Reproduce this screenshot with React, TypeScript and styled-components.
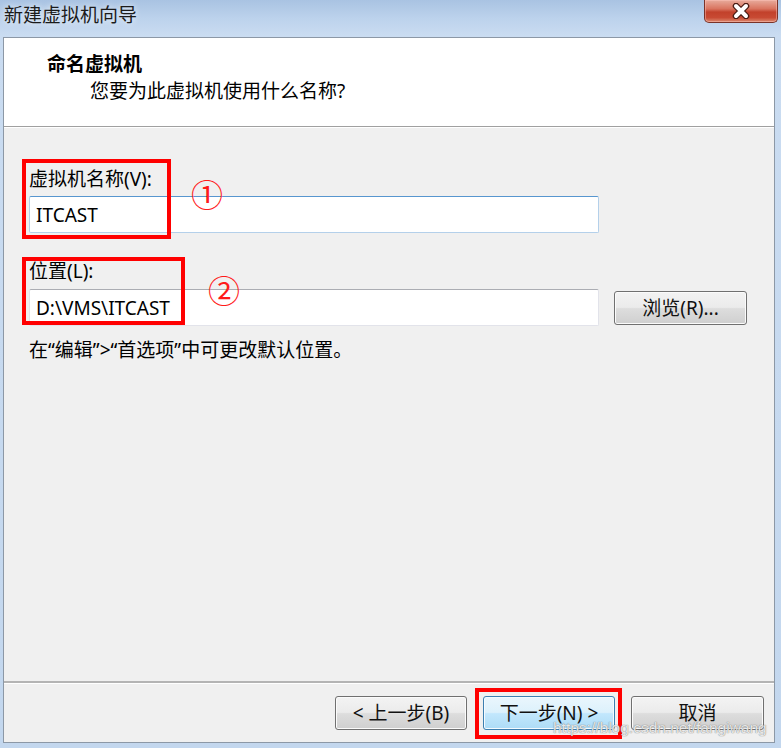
import React from "react";
import styled, { createGlobalStyle } from "styled-components";

const GlobalStyle = createGlobalStyle`
  html, body {
    margin: 0;
    padding: 0;
  }
  body {
    width: 781px;
    height: 748px;
    overflow: hidden;
    font-family: "Noto Sans", "Noto Sans CJK SC", sans-serif;
    color: #000;
  }
`;

const Frame = styled.div`
  width: 781px;
  height: 748px;
  box-sizing: border-box;
  display: flex;
  flex-direction: column;
  padding: 0 6px 5px 3px;
  background: linear-gradient(180deg, #a9c3e2 0px, #bcd2ec 18px, #cadcf1 36px, #c3d7ee 100%);
`;

const TitleBar = styled.div`
  height: 37px;
  flex: none;
  display: flex;
  justify-content: space-between;
  align-items: flex-start;
`;

const TitleText = styled.span`
  padding: 3px 0 0 1px;
  font-size: 19px;
  line-height: 24px;
  color: #1b1b1b;
  text-shadow: 0 0 6px rgba(255, 255, 255, 0.9);
`;

const CloseButton = styled.div`
  width: 74px;
  height: 23px;
  margin-right: -3px;
  box-sizing: border-box;
  border: 1px solid #7a3328;
  border-top: none;
  border-radius: 0 0 5px 5px;
  display: flex;
  align-items: center;
  justify-content: center;
  background: linear-gradient(180deg, #e8ab9c 0%, #d9745f 40%, #c2412b 55%, #c84a33 80%, #dc8a70 100%);
  box-shadow: inset 0 0 0 1px rgba(255, 200, 190, 0.45);
`;

const Client = styled.div`
  flex: 1;
  display: flex;
  flex-direction: column;
  border: 1px solid #8c98a6;
  background: #f0f0f0;
  min-height: 0;
`;

const Header = styled.div`
  height: 89px;
  flex: none;
  box-sizing: border-box;
  background: #fff;
  border-bottom: 1px solid #a0a0a0;
  box-shadow: 0 1px 0 #ffffff;
  padding: 14px 0 0 43px;
`;

const HeaderTitle = styled.div`
  font-size: 19px;
  line-height: 24px;
  font-weight: 700;
`;

const HeaderSubtitle = styled.div`
  margin-top: 3px;
  padding-left: 43px;
  font-size: 19px;
  line-height: 24px;
`;

const Body = styled.div`
  flex: 1;
  position: relative;
  margin-top: 1px;
  padding: 39px 27px 0 25px;
`;

const Label = styled.div<{ $gap: number }>`
  font-size: 19px;
  line-height: 24px;
  margin-bottom: ${(p) => p.$gap}px;
`;

const FieldRow = styled.div<{ $after: number }>`
  display: grid;
  grid-template-columns: 1fr 133px;
  column-gap: 15px;
  align-items: center;
  margin-bottom: ${(p) => p.$after}px;
`;

const TextInput = styled.input<{ $focused?: boolean }>`
  height: 37px;
  box-sizing: border-box;
  padding: 0 6px;
  margin: 0;
  border: 1px solid ${(p) => (p.$focused ? "#b4d0ea" : "#e2e3ea")};
  border-top-color: ${(p) => (p.$focused ? "#5796cf" : "#abadb3")};
  border-radius: 2px;
  background: #fff;
  font-family: "Noto Sans", "Noto Sans CJK SC", sans-serif;
  font-size: 19px;
  color: #000;
  outline: none;
`;

const Hint = styled.div`
  font-size: 19px;
  line-height: 24px;
`;

const Button = styled.div<{ $hot?: boolean; $w?: number }>`
  width: ${(p) => p.$w ?? 133}px;
  height: 34px;
  box-sizing: border-box;
  display: flex;
  align-items: center;
  justify-content: center;
  border: 1px solid ${(p) => (p.$hot ? "#3c7fb1" : "#707070")};
  border-radius: 3px;
  background: ${(p) =>
    p.$hot
      ? "linear-gradient(180deg, #eaf6fd 0%, #dcf1fc 48%, #c2e7fd 52%, #addcf6 100%)"
      : "linear-gradient(180deg, #f3f3f3 0%, #ebebeb 48%, #dddddd 52%, #cfcfcf 100%)"};
  box-shadow: inset 0 0 0 1px ${(p) => (p.$hot ? "#f4fbff" : "#fbfbfb")};
  font-size: 19px;
  line-height: 24px;
  color: #111;
  white-space: pre;
`;

const Footer = styled.div`
  height: 61px;
  flex: none;
  box-sizing: border-box;
  position: relative;
  border-top: 2px solid #b4b4b4;
  box-shadow: inset 0 1px 0 #ffffff;
  display: flex;
  justify-content: flex-end;
  align-items: flex-start;
  gap: 16px;
  padding: 13px 10px 0 0;
`;

const NextWrap = styled.div`
  position: relative;
`;

const RedBox = styled.div<{ $x: number; $y: number; $w: number; $h: number }>`
  position: absolute;
  left: ${(p) => p.$x}px;
  top: ${(p) => p.$y}px;
  width: ${(p) => p.$w}px;
  height: ${(p) => p.$h}px;
  box-sizing: border-box;
  border: 4px solid #ff0000;
  pointer-events: none;
`;

const Mark = styled.span<{ $x: number; $y: number }>`
  position: absolute;
  left: ${(p) => p.$x}px;
  top: ${(p) => p.$y}px;
  font-family: "Noto Sans CJK SC", sans-serif;
  font-size: 32px;
  line-height: 32px;
  color: #ff1a1a;
`;

const Watermark = styled.span`
  position: absolute;
  left: 549px;
  top: 35px;
  font-family: "Liberation Sans", Arial, sans-serif;
  font-size: 15.5px;
  line-height: 20px;
  white-space: nowrap;
  color: rgba(250, 250, 250, 0.85);
  text-shadow: 0 0 1px rgba(110, 110, 110, 0.8), 0 0 1px rgba(110, 110, 110, 0.6);
  pointer-events: none;
`;

const CloseGlyph = () => (
  <svg width="20" height="16" viewBox="0 0 20 16">
    <path d="M5 3 L15 13 M15 3 L5 13" stroke="#4a1c14" strokeWidth="6.5" strokeLinecap="round" />
    <path d="M5 3 L15 13 M15 3 L5 13" stroke="#ffffff" strokeWidth="4" strokeLinecap="round" />
  </svg>
);

const App = () => (
  <>
    <GlobalStyle />
    <Frame>
      <TitleBar>
        <TitleText>新建虚拟机向导</TitleText>
        <CloseButton>
          <CloseGlyph />
        </CloseButton>
      </TitleBar>
      <Client>
        <Header>
          <HeaderTitle>命名虚拟机</HeaderTitle>
          <HeaderSubtitle>您要为此虚拟机使用什么名称?</HeaderSubtitle>
        </Header>
        <Body>
          <Label $gap={5}>虚拟机名称(V):</Label>
          <FieldRow $after={26}>
            <TextInput $focused readOnly value="ITCAST" />
            <span />
          </FieldRow>
          <Label $gap={6}>位置(L):</Label>
          <FieldRow $after={12}>
            <TextInput readOnly value="D:\VMS\ITCAST" />
            <Button>浏览(R)...</Button>
          </FieldRow>
          <Hint>在“编辑”&gt;“首选项”中可更改默认位置。</Hint>

          <RedBox $x={18} $y={31} $w={149} $h={80} />
          <RedBox $x={18} $y={129} $w={163} $h={68} />
          <Mark $x={187} $y={49}>①</Mark>
          <Mark $x={204} $y={145}>②</Mark>
        </Body>
        <Footer>
          <Button $w={132}>{"< 上一步(B)"}</Button>
          <NextWrap>
            <Button $hot $w={132}>{"下一步(N) >"}</Button>
            <RedBox $x={-8} $y={-8} $w={147} $h={51} />
          </NextWrap>
          <Button $w={133}>取消</Button>
          <Watermark>https://blog.csdn.net/fangiwang</Watermark>
        </Footer>
      </Client>
    </Frame>
  </>
);

export default App;
